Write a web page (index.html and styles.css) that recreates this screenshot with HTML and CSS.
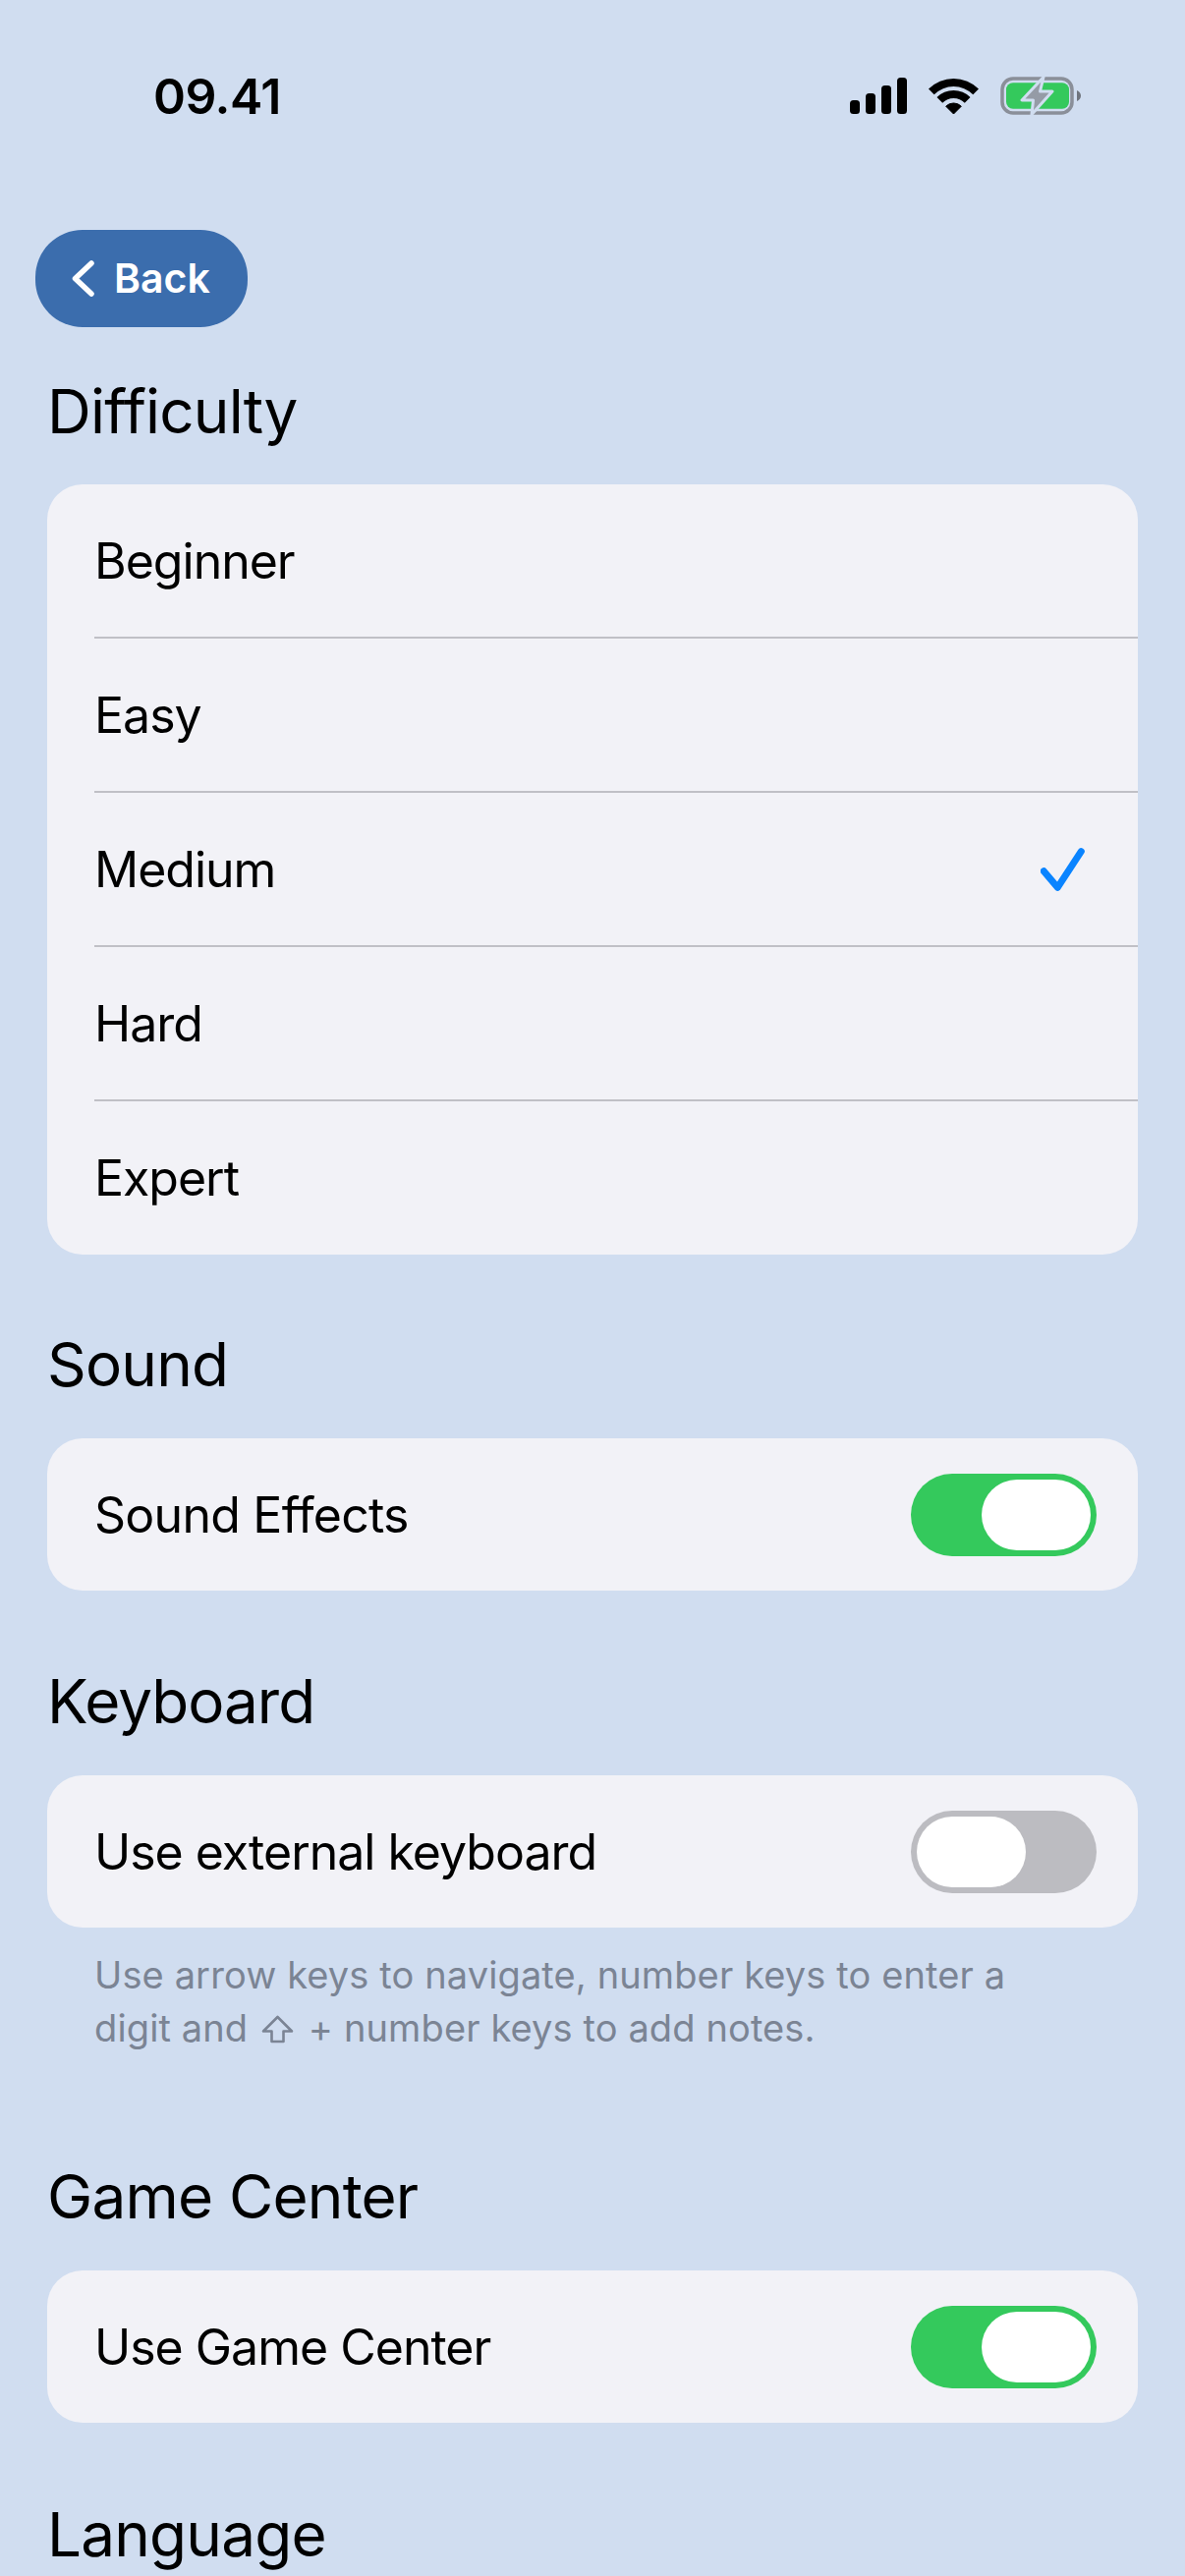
FILE: index.html
```html
<!DOCTYPE html>
<html lang="en">
<head>
<meta charset="utf-8">
<title>Settings</title>
<link rel="stylesheet" href="styles.css">
</head>
<body>
<div class="page">
  <header class="status">
    <span class="time">09.41</span>
    <div class="status-icons">
      <svg class="ic-signal" width="58" height="37" viewBox="0 0 58 37"><rect x="0" y="23" width="10" height="14" rx="3.5"/><rect x="16" y="16" width="10" height="21" rx="3.5"/><rect x="32" y="8" width="10" height="29" rx="3.5"/><rect x="48" y="0" width="10" height="37" rx="3.5"/></svg>
      <svg class="ic-wifi" width="51" height="37" viewBox="0 0 51 37"><path d="M25.500 37 17.700 29.200A11 11 0 0 1 33.300 29.200Z" stroke="#000" stroke-width="1" stroke-linejoin="round"/><path d="M8.500 20 14.200 25.700A16 16 0 0 1 36.800 25.700L42.500 20A24 24 0 0 0 8.500 20Z"/><path d="M0 11.500 5.700 17.200A28 28 0 0 1 45.300 17.200L51 11.500A36 36 0 0 0 0 11.500Z"/></svg>
      <svg class="ic-battery" width="82" height="39" viewBox="0 0 82 39"><rect x="2" y="2" width="71" height="35" rx="11" fill="none" stroke="#8a8f99" stroke-width="3.500"/><rect x="6" y="6.300" width="64" height="26.400" rx="7" fill="#34c95c"/><path d="M78 14c2.500 1 4 3 4 5.500s-1.500 4.500-4 5.500Z" fill="#6f747d"/><path d="M44 0.500 22 24H33.500L32 38.500 53 15H40.500Z" fill="#959ba6" stroke="#d0ddf0" stroke-width="3" stroke-linejoin="round"/></svg>
    </div>
  </header>

  <nav class="nav">
    <button class="back" type="button">
      <svg width="23" height="37" viewBox="0 0 23 37"><path d="M20 3 3.500 18.500 20 34" fill="none" stroke="#fff" stroke-width="5.500" stroke-linecap="round" stroke-linejoin="round"/></svg>
      <span>Back</span>
    </button>
  </nav>

  <h2 class="heading h-first">Difficulty</h2>
  <section class="card">
    <div class="row"><span>Beginner</span></div>
    <div class="row"><span>Easy</span></div>
    <div class="row"><span>Medium</span>
      <svg class="check" width="45" height="44" viewBox="0 0 45 44"><path d="M3.300 23.700 17.300 40.300 41.300 3.700" fill="none" stroke="#0a84ff" stroke-width="7" stroke-linecap="round" stroke-linejoin="round"/></svg>
    </div>
    <div class="row"><span>Hard</span></div>
    <div class="row"><span>Expert</span></div>
  </section>

  <h2 class="heading">Sound</h2>
  <section class="card">
    <div class="row row-toggle"><span class="label-wide">Sound Effects</span><div class="toggle on"><i class="knob"></i></div></div>
  </section>

  <h2 class="heading h-keyboard">Keyboard</h2>
  <section class="card">
    <div class="row row-toggle"><span>Use external keyboard</span><div class="toggle"><i class="knob"></i></div></div>
  </section>
  <p class="note">Use arrow keys to navigate, number keys to enter a<br>digit and <svg class="shift" width="33" height="30" viewBox="0 0 33 30"><path d="M16.500 2 2 16.500h8.500V27h12V16.500H31Z" fill="none" stroke="#7b8494" stroke-width="2.600" stroke-linejoin="round"/></svg> + number keys to add notes.</p>

  <h2 class="heading h-after-note">Game Center</h2>
  <section class="card">
    <div class="row row-toggle"><span>Use Game Center</span><div class="toggle on"><i class="knob"></i></div></div>
  </section>

  <h2 class="heading h-last">Language</h2>
</div>
</body>
</html>
```
FILE: styles.css
```css
* { box-sizing: border-box; }
html, body { margin: 0; padding: 0; }
body {
  width: 1206px;
  height: 2622px;
  overflow: hidden;
  background: #d0ddf0;
  font-family: Inter, "Liberation Sans", sans-serif;
  color: #000;
}
.page { display: flex; flex-direction: column; height: 2622px; overflow: hidden; }

.status {
  height: 194px;
  display: flex;
  justify-content: space-between;
  align-items: flex-start;
  padding: 68px 106px 0 156px;
  flex: none;
}
.time { font-size: 50px; font-weight: 600; line-height: 60px; letter-spacing: -0.5px; }
.status-icons { display: flex; align-items: center; gap: 22px; padding-top: 10px; }

.nav { padding: 40px 0 0 36px; flex: none; }
.back {
  width: 216px;
  height: 99px;
  border: 0;
  border-radius: 48px;
  background: #3b6dad;
  color: #fff;
  font: 600 41px/1 Inter, "Liberation Sans", sans-serif;
  display: flex;
  align-items: center;
  gap: 20px;
  padding: 0 0 0 37px;
}

.heading {
  margin: 0;
  font-size: 62px;
  font-weight: 400;
  line-height: 75px;
  letter-spacing: -0.8px;
  flex: none;
  padding: 74px 0 38px 48px;
}
.h-first { padding-top: 48px; padding-bottom: 37px; }
.h-keyboard { padding-top: 75px; letter-spacing: -1px; }
.h-after-note { padding-top: 107px; }
.h-last { padding-top: 76px; }

.card {
  margin: 0 48px;
  background: #f2f2f7;
  border-radius: 36px;
  flex: none;
  overflow: hidden;
}
.row {
  height: 157px;
  margin-left: 48px;
  padding-right: 54px;
  display: flex;
  align-items: center;
  justify-content: space-between;
  font-size: 50px;
  letter-spacing: -1px;
  border-bottom: 2px solid #c0c0c6;
}
.row:last-child { border-bottom: 0; height: 156px; }
.row.row-toggle { height: 155px; padding-right: 42px; }
.label-wide { letter-spacing: -0.75px; }

.toggle {
  width: 189px;
  height: 84px;
  border-radius: 42px;
  padding: 6px;
  background: #bcbcc1;
  display: flex;
  justify-content: flex-start;
}
.toggle.on { background: #34c95c; justify-content: flex-end; }
.knob { display: block; width: 111px; height: 72px; border-radius: 36px; background: #fff; }

.note {
  margin: 0;
  padding: 21px 48px 0 96px;
  font-size: 38px;
  line-height: 54px;
  letter-spacing: 0.12px;
  color: #7b8494;
  flex: none;
}
.shift { vertical-align: -3px; margin: 0 4px 0 3px; }
```
